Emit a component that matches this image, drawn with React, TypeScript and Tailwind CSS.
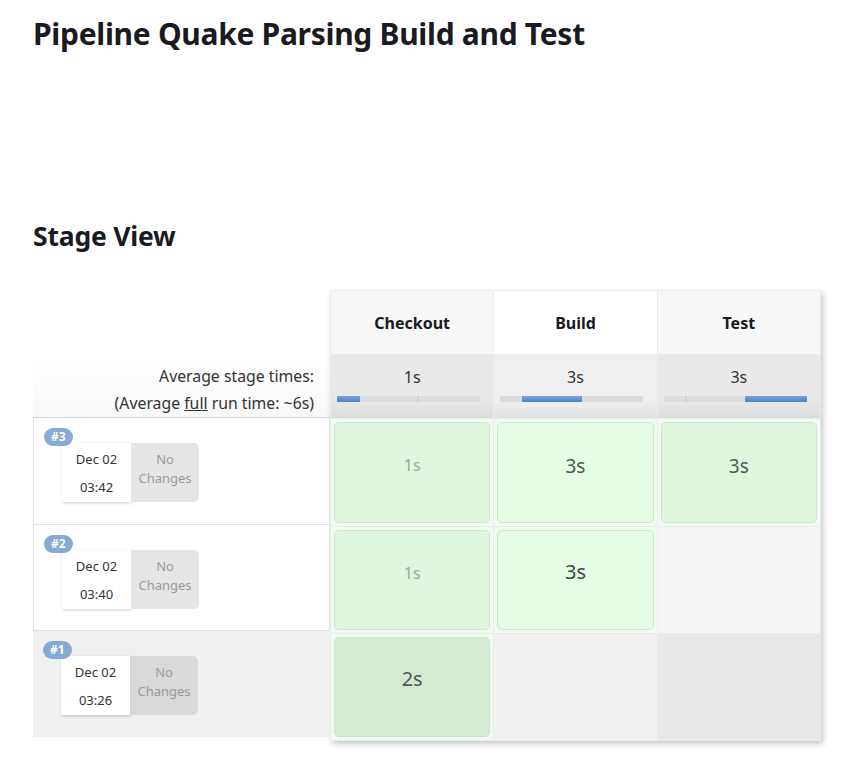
import React from "react";

type Cell = { label: string; size: string; tone: string; bg: string } | { empty: string };

const stages = [
  { name: "Checkout", headBg: "bg-[#f7f7f7]", avg: "1s", avgBg: "bg-[linear-gradient(#e9e9e9_0%,#e9e9e9_70%,#dcdcdc_100%)]", track: { from: 0, to: 16, tick: 56 } },
  { name: "Build", headBg: "bg-white", avg: "3s", avgBg: "bg-[linear-gradient(#f0f0f0_0%,#f0f0f0_70%,#e2e2e2_100%)]", track: { from: 15, to: 57, tick: -1 } },
  { name: "Test", headBg: "bg-[#f7f7f7]", avg: "3s", avgBg: "bg-[linear-gradient(#e9e9e9_0%,#e9e9e9_70%,#dcdcdc_100%)]", track: { from: 57, to: 100, tick: 15 } },
];

const runs: { id: string; date: string; time: string; rowBg: string; changesBg: string; h: string; cells: Cell[] }[] = [
  {
    id: "#3",
    date: "Dec 02",
    time: "03:42",
    rowBg: "bg-white",
    changesBg: "bg-[#e5e5e5]",
    h: "h-[107px]",
    cells: [
      { label: "1s", size: "pt-[30px] text-[16px]", tone: "text-[#9aa89a]", bg: "bg-[#dff7df]" },
      { label: "3s", size: "pt-[29px] text-[19px]", tone: "text-[#555]", bg: "bg-[#e5fde5]" },
      { label: "3s", size: "pt-[29px] text-[19px]", tone: "text-[#555]", bg: "bg-[#dff7df]" },
    ],
  },
  {
    id: "#2",
    date: "Dec 02",
    time: "03:40",
    rowBg: "bg-white",
    changesBg: "bg-[#e5e5e5]",
    h: "h-[106px]",
    cells: [
      { label: "1s", size: "pt-[30px] text-[16px]", tone: "text-[#9aa89a]", bg: "bg-[#dff7df]" },
      { label: "3s", size: "pt-[26px] text-[20px]", tone: "text-[#444]", bg: "bg-[#e5fde5]" },
      { empty: "bg-[#f5f5f5]" },
    ],
  },
  {
    id: "#1",
    date: "Dec 02",
    time: "03:26",
    rowBg: "bg-[#f0f0f0]",
    changesBg: "bg-[#d9d9d9]",
    h: "h-[106px]",
    cells: [
      { label: "2s", size: "pt-[26px] text-[20px]", tone: "text-[#555]", bg: "bg-[#d3ebd3]" },
      { empty: "bg-[#f1f1f1]" },
      { empty: "bg-[#e9e9e9]" },
    ],
  },
];

function Progress({ from, to, tick }: { from: number; to: number; tick: number }) {
  return (
    <div className="relative ml-[6px] mt-[8px] h-[6px] w-[143px] bg-[#dcdcdc]">
      {tick >= 0 ? (
        <span className="absolute top-0 h-full w-[2px] bg-[#cfcfcf]" style={{ left: `${tick}%` }} />
      ) : null}
      <span
        className="absolute top-0 h-full bg-[linear-gradient(#7aa3e0,#4f7fcc)]"
        style={{ left: `${from}%`, width: `${to - from}%` }}
      />
    </div>
  );
}

export default function App() {
  return (
    <div className="min-h-[759px] bg-white pl-[33px] pt-[14px] font-['Noto_Sans',sans-serif] text-[#1a1a22]">
      <h1 className="text-[30px] font-bold leading-[40px] tracking-[-0.3px]">
        Pipeline Quake Parsing Build and Test
      </h1>
      <h2 className="mt-[165px] text-[26.5px] font-bold leading-[34px] tracking-[-0.2px]">Stage View</h2>

      <div className="mt-[37px] flex">
        <div className="w-[297px]">
          <div className="h-[64px]" />
          <div className="flex h-[64px] flex-col items-end justify-center border-b border-[#d6d6d6] bg-[linear-gradient(#ffffff,#f8f8f8)] pr-[16px] pt-[8px] text-[15.8px] leading-[27px] text-[#333]">
            <span>Average stage times:</span>
            <span>
              (Average <span className="underline">full</span> run time: ~6s)
            </span>
          </div>
          {runs.map((run, i) => (
            <div
              key={run.id}
              className={`relative ${run.h} ${run.rowBg} ${
                i < 2 ? "border border-t-0 border-[#e3e3e3]" : ""
              }`}
            >
              <span className="absolute left-[10px] top-[10px] z-10 rounded-full bg-[#86aad3] px-[7px] text-[12px] font-bold leading-[18px] text-white">
                {run.id}
              </span>
              <div className="absolute left-[28px] top-[25px] flex h-[59px]">
                <div className="flex w-[69px] flex-col items-center justify-center gap-[6px] bg-white text-[13px] leading-[22px] text-[#333] shadow-[1px_1px_3px_rgba(0,0,0,0.2)]">
                  <span>{run.date}</span>
                  <span>{run.time}</span>
                </div>
                <div
                  className={`flex w-[68px] flex-col items-center justify-center rounded-r-[5px] ${run.changesBg} pb-[8px] text-center text-[13px] leading-[19px] text-[#9a9a9a]`}
                >
                  <span>No</span>
                  <span>Changes</span>
                </div>
              </div>
            </div>
          ))}
        </div>

        <div className="grid w-[491px] grid-cols-3 gap-px bg-[#ebebeb] p-px shadow-[2px_3px_6px_rgba(0,0,0,0.22)]">
          {stages.map((s) => (
            <div
              key={s.name}
              className={`flex h-[63px] items-center justify-center text-[16px] font-bold ${s.headBg}`}
            >
              {s.name}
            </div>
          ))}
          {stages.map((s) => (
            <div key={s.name + "-avg"} className={`h-[63px] pt-[11px] text-center ${s.avgBg}`}>
              <div className="text-[16px] leading-[22px] text-[#333]">{s.avg}</div>
              <Progress {...s.track} />
            </div>
          ))}
          {runs.map((run) =>
            run.cells.map((c, j) =>
              "empty" in c ? (
                <div key={run.id + j} className={`${run.h} ${c.empty}`} />
              ) : (
                <div key={run.id + j} className={`${run.h} bg-[#f2fbf2] p-[3px]`}>
                  <div
                    className={`flex h-full items-start justify-center rounded-[5px] border border-[#cfe3cf] ${c.bg} ${c.size} ${c.tone}`}
                  >
                    {c.label}
                  </div>
                </div>
              ),
            ),
          )}
        </div>
      </div>
    </div>
  );
}
